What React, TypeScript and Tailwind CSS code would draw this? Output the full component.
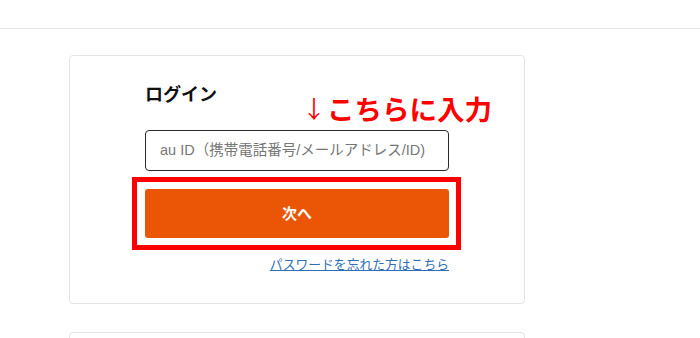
import React from 'react'

function App() {
  return (
    <div className="w-[700px] h-[338px] overflow-hidden bg-white font-['Liberation_Sans','Noto_Sans_CJK_JP',sans-serif]">
      {/* header strip */}
      <div className="h-[29px] border-b border-[#e6e6e6]"></div>

      {/* login card */}
      <div className="relative mt-[26px] ml-[69px] w-[456px] h-[249px] border border-[#e4e4e4] rounded-[4px] pl-[75px] pt-[24px]">
        <h2 className="text-[18px] leading-[26px] font-bold text-[#111] font-['Noto_Sans_CJK_JP',sans-serif]">ログイン</h2>

        <div className="mt-[24px] w-[304px] h-[41px] border-[1.5px] border-[#2a2a2a] rounded-[4px] flex items-center pl-[14px]">
          <span className="text-[14.5px] text-[#777]">au ID（携帯電話番号/メールアドレス/ID)</span>
        </div>

        <button className="mt-[18px] w-[304px] h-[49px] rounded-[3px] bg-[#ea5506] text-white text-[15px] font-bold font-['Noto_Sans_CJK_JP',sans-serif] flex items-center justify-center">
          次へ
        </button>

        <div className="mt-[18px] w-[304px] flex justify-end">
          <a href="#" className="text-[12.8px] leading-[16px] text-[#2f6fb7] underline font-['Noto_Sans_CJK_JP',sans-serif]">パスワードを忘れた方はこちら</a>
        </div>

        {/* annotation overlays */}
        <div className="absolute left-[232px] top-[34px] text-[27.5px] leading-[36px] text-[#ff0000] font-bold font-['Noto_Sans_CJK_JP',sans-serif] flex items-center">
          <span className="text-[24px] font-normal mr-[1px]">↓</span>
          <span>こちらに入力</span>
        </div>
        <div className="absolute left-[62px] top-[121px] w-[329px] h-[73px] border-[5px] border-[#ff0000]"></div>
      </div>

      {/* next card peeking */}
      <div className="mt-[28px] ml-[69px] w-[456px] h-[40px] border border-[#e4e4e4] rounded-[4px]"></div>
    </div>
  )
}

export default App
